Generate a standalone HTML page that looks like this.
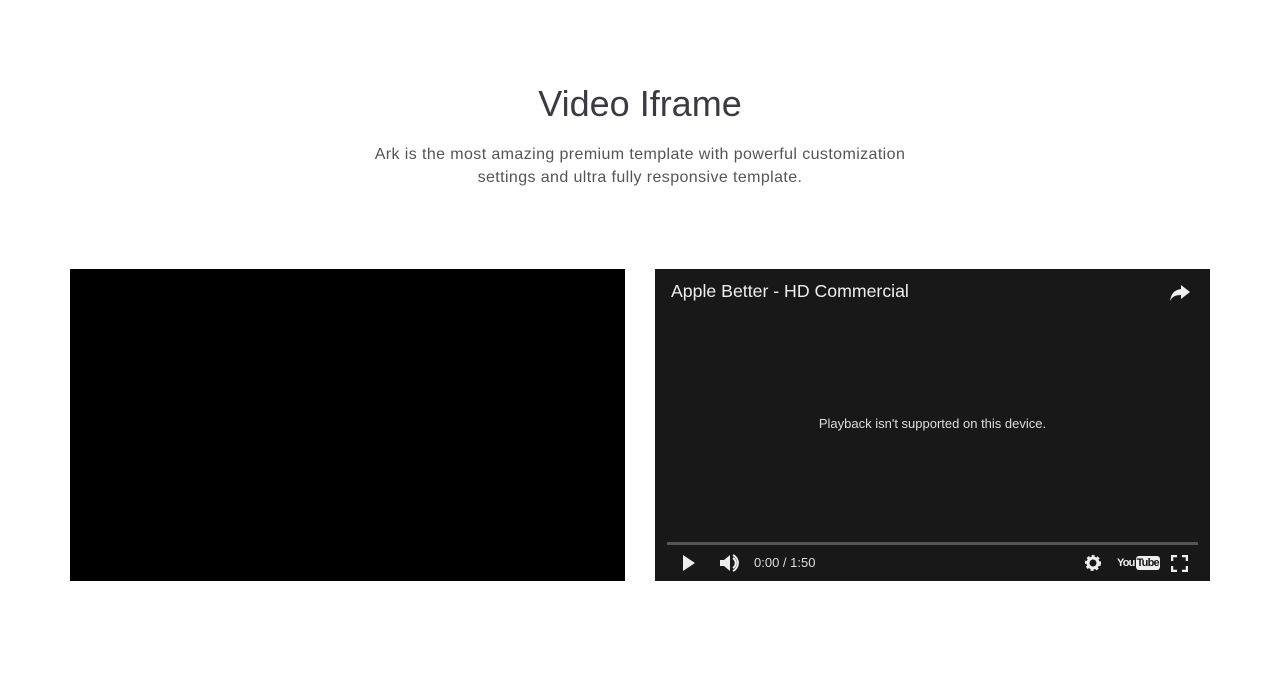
<!DOCTYPE html>
<html><head><style>
body{margin:0;background:#fff;width:1280px;height:691px;overflow:hidden;font-family:"Liberation Sans",sans-serif;}
h1{position:absolute;top:82px;left:0;width:1280px;text-align:center;margin:0;font-weight:300;font-size:36px;color:#3a3a42;line-height:44px;}
p{position:absolute;top:143px;left:0;width:1280px;text-align:center;margin:0;font-size:16px;letter-spacing:0.4px;line-height:23px;color:#555;}
.v1{position:absolute;left:70px;top:269px;width:555px;height:312px;background:#000;}
.v2{position:absolute;left:655px;top:269px;width:555px;height:312px;background:#181818;color:#eee;}
.t{position:absolute;left:16px;top:12px;font-size:17.7px;color:#eee}
.m{position:absolute;top:147px;width:100%;text-align:center;font-size:13px;color:#ddd}
.bar{position:absolute;left:12px;right:12px;top:273px;height:3px;background:#555}
.time{position:absolute;left:99px;top:286px;font-size:13px;color:#ddd}
</style></head><body>
<h1>Video Iframe</h1>
<p>Ark is the most amazing premium template with powerful customization<br>settings and ultra fully responsive template.</p>
<div class="v1"></div>
<div class="v2">
<div class="t">Apple Better - HD Commercial</div>
<svg style="position:absolute;left:514px;top:15px" width="22" height="18" viewBox="0 0 22 18"><path d="M12 1l9 7-9 7v-4C6 11 3 13 1 17 2 10 5 6 12 5z" fill="#eee"/></svg>
<div class="m">Playback isn't supported on this device.</div>
<div class="bar"></div>
<svg style="position:absolute;left:27px;top:285px" width="14" height="18"><path d="M1 1l12 8-12 8z" fill="#eee"/></svg>
<svg style="position:absolute;left:64px;top:284px" width="22" height="20"><path d="M1 7h4l6-5v16l-6-5H1z" fill="#eee"/><path d="M14 5a6 6 0 0 1 0 10M14 2a9 9 0 0 1 0 16" stroke="#eee" stroke-width="2" fill="none"/></svg>
<div class="time">0:00 / 1:50</div>
<svg style="position:absolute;left:429px;top:285px" width="18" height="18" viewBox="0 0 18 18"><circle cx="9" cy="9" r="6" fill="none" stroke="#eee" stroke-width="4" stroke-dasharray="2.5 2"/><circle cx="9" cy="9" r="5" fill="none" stroke="#eee" stroke-width="3"/></svg>
<div style="position:absolute;left:462px;top:287px;font-size:11px;font-weight:bold;color:#eee;letter-spacing:-0.8px;line-height:14px">You<span style="display:inline-block;background:#eee;color:#181818;border-radius:3px;padding:0 1px;margin-left:1px">Tube</span></div>
<svg style="position:absolute;left:516px;top:286px" width="17" height="17"><path d="M1 6V1h5M11 1h5v5M16 11v5h-5M6 16H1v-5" stroke="#eee" stroke-width="2.5" fill="none"/></svg>
</div>
</body></html>
